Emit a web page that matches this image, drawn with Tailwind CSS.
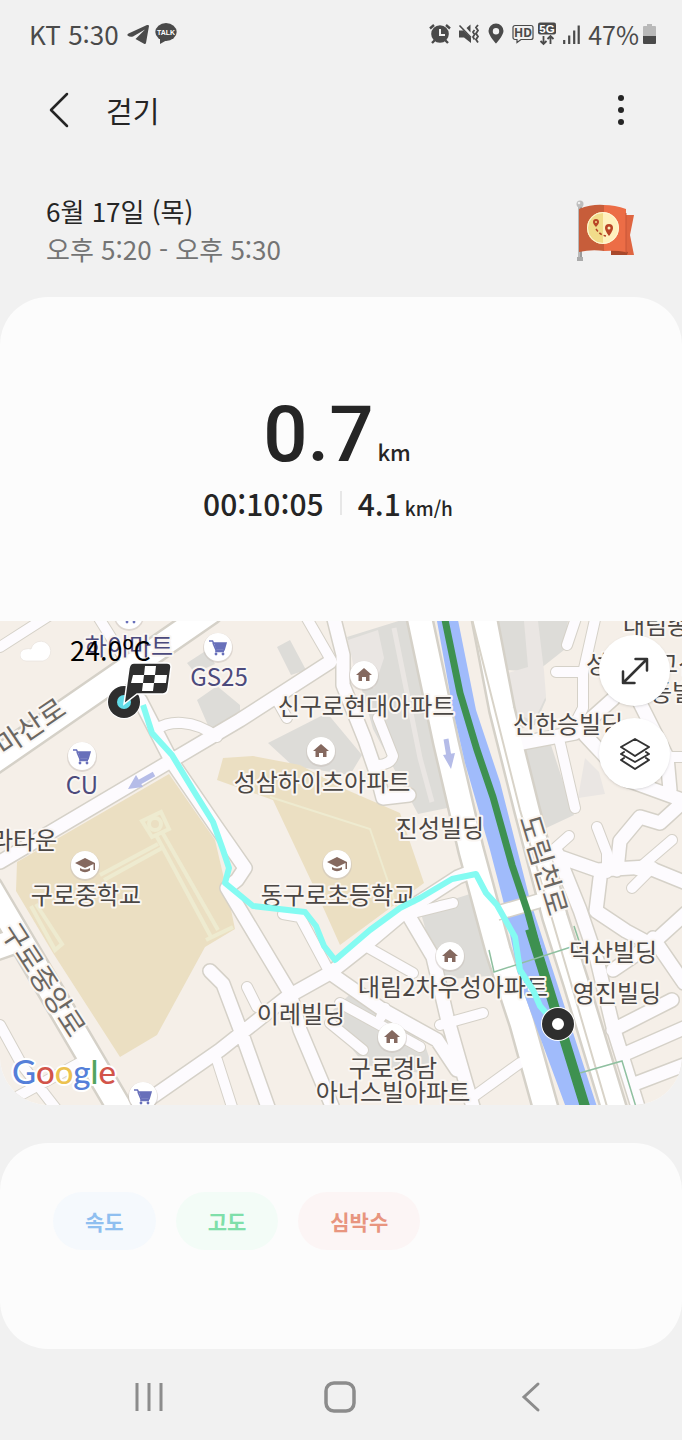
<!DOCTYPE html>
<html lang="ko">
<head>
<meta charset="utf-8">
<meta name="viewport" content="width=device-width, initial-scale=1">
<title>걷기</title>
<script src="https://cdn.jsdelivr.net/npm/@tailwindcss/browser@4"></script>
</head>
<body class="flex min-h-screen flex-col bg-[#f1f1f1] font-['Noto_Sans_CJK_KR',sans-serif] text-[#252525]">

<!-- Status bar -->
<div class="flex h-[68px] items-center justify-between pl-[29px] pr-[26px] text-[26px] leading-8 text-[#4a4a4a]">
  <div class="flex items-center gap-2">
    <span>KT 5:30</span>
    <svg class="h-6 w-[22px]" viewBox="0 0 22 24" fill="currentColor" aria-hidden="true"><path d="M.5 13.500Q0 12 1.500 11.500L20 3q2-.5 2 1l-3 17q-.5 1.500-2 .7L8.500 17 18 7.500 6 14.500q-3 1-5.500-1z"/></svg>
    <svg class="-ml-0.5 h-6 w-[22px]" viewBox="0 0 22 24" aria-hidden="true"><ellipse cx="11" cy="10" rx="10.700" ry="9" fill="currentColor"/><path d="M5 16v6l7-4z" fill="currentColor"/><text x="11" y="13" text-anchor="middle" font-family="Liberation Sans" font-size="7" font-weight="700" fill="#fff">TALK</text></svg>
  </div>
  <div class="flex items-center">
    <svg class="h-6 w-[22px]" viewBox="0 0 22 24" fill="none" stroke="currentColor" aria-hidden="true"><circle cx="11" cy="12" r="8.800" fill="currentColor" stroke="none"/><path d="M1 6.500 5 3M21 6.500 17 3M5.500 18.500 3 21M16.500 18.500 19 21" stroke-width="2.400"/><path d="M11 7v6h5" stroke="#f1f1f1" stroke-width="2"/></svg>
    <svg class="ml-[7px] h-6 w-[22px]" viewBox="0 0 22 24" fill="currentColor" stroke="currentColor" aria-hidden="true"><path d="M1 8.500h4.500L13 16v5l-7-5.500H1zM12.500 2.500v8L8.500 6z" stroke="none"/><path d="m1.500 3.500 11.500 12" fill="none" stroke-width="1.600"/><path d="m16.500 8-1.500 2 1.500 2.500-1.500 2.500 1.500 2.500M20 3l-2 2.500 2 3-2 3 2 3-2 3 2 3" fill="none" stroke-width="1.800"/></svg>
    <svg class="ml-2 h-6 w-4" viewBox="0 0 16 24" aria-hidden="true"><path fill="currentColor" fill-rule="evenodd" d="M8 1.500a7.500 7.500 0 0 0-7.500 7.500c0 4.500 7.500 12.500 7.500 12.500s7.500-8 7.500-12.500A7.500 7.500 0 0 0 8 1.500m0 4.500a3.200 3.200 0 1 1 0 6.400A3.200 3.200 0 0 1 8 6"/></svg>
    <svg class="ml-2 h-6 w-[22px]" viewBox="0 0 22 24" aria-hidden="true"><path d="M3 3.500h16a2 2 0 0 1 2 2v10a2 2 0 0 1-2 2H9l-4 3v-3H3a2 2 0 0 1-2-2v-10a2 2 0 0 1 2-2z" fill="none" stroke="currentColor" stroke-width="1.200"/><text x="11" y="15" text-anchor="middle" font-family="Noto Sans" font-size="12" font-weight="700" fill="currentColor">HD</text></svg>
    <svg class="ml-1 h-6 w-[18px]" viewBox="0 0 18 24" fill="none" stroke="currentColor" aria-hidden="true"><rect width="18" height="12" y="0.500" rx="2" fill="currentColor" stroke="none"/><text x="9" y="10.700" text-anchor="middle" font-family="Liberation Sans" font-size="11.500" font-weight="700" fill="#fff" stroke="none">5G</text><path d="M5.500 14v8M2.500 19l3 3 3-3M12.500 22v-8M9.500 17l3-3 3 3" stroke-width="1.800"/></svg>
    <svg class="ml-[7px] h-6 w-[17px]" viewBox="0 0 17 24" aria-hidden="true"><path d="M1.200 18v4M6.200 13.500V22M11.200 8.500V22M15.700 3.500V22" stroke="currentColor" stroke-width="2.200"/></svg>
    <span class="ml-2 text-[25px]">47%</span>
    <svg class="ml-1 h-6 w-[13px]" viewBox="0 0 13 24" aria-hidden="true"><path d="M4 2h5v2h3a1 1 0 0 1 1 1v9H0V5a1 1 0 0 1 1-1h3z" fill="#b9b9b9"/><path d="M0 14h13v7a1 1 0 0 1-1 1H1a1 1 0 0 1-1-1z" fill="currentColor"/></svg>
  </div>
</div>

<!-- App bar -->
<header class="flex h-[84px] items-center justify-between pl-[42px] pr-[45px]">
  <div class="flex items-center gap-[30px]">
    <button type="button" aria-label="뒤로" class="flex h-10 w-[34px] items-center justify-center"><svg class="h-9 w-5" viewBox="0 0 20 36" fill="none" stroke="currentColor" stroke-width="2.500" stroke-linecap="round" stroke-linejoin="round"><path d="M18 2 2 18l16 16"/></svg></button>
    <h1 class="text-[29px] leading-10">걷기</h1>
  </div>
  <button type="button" aria-label="더보기" class="flex h-10 w-8 items-center justify-center"><svg class="h-8 w-2" viewBox="0 0 8 32" fill="currentColor"><circle cx="4" cy="4" r="3"/><circle cx="4" cy="16" r="3"/><circle cx="4" cy="28" r="3"/></svg></button>
</header>

<!-- Session summary -->
<section class="flex h-[145px] items-start justify-between pl-[46px] pr-12 pt-10">
  <div class="text-[26px] leading-[38px]">
    <p>6월 17일 (목)</p>
    <p class="text-[#747474]">오후 5:20 - 오후 5:30</p>
  </div>
  <svg class="mt-2 h-[64px] w-[60px]" viewBox="0 0 60 64" aria-hidden="true">
    <path d="M4 6h4v53H4z" fill="#b9b9b9"/><path d="M6 6h2v53H6z" fill="#9a9a9a"/><circle cx="6" cy="4" r="3.500" fill="#bdbdbd"/><circle cx="5" cy="3" r="1.300" fill="#eee"/><rect x="3" y="57" width="6" height="4" fill="#aaa"/>
    <path d="M38 15h22l-4 20 4 20H38z" fill="#df6541"/><path d="M37 49l17 3-1 3H37z" fill="#a8482b"/>
    <path d="M5 9q13-5 25-4v46q-12-2-25 1z" fill="#c75d3a"/><path d="M30 5q11 0 22 4v43q-11-2-22-1z" fill="#ec6d46"/>
    <path d="M52 13v40" stroke="#c85739" stroke-width="1"/>
    <circle cx="29" cy="28" r="16" fill="#fff1bd"/><path d="M29 12a16 16 0 0 0 0 32z" fill="#f1dc8a"/><circle cx="29" cy="28" r="15.500" fill="none" stroke="#fff5d8"/>
    <path d="M22 29q4 6 10 7" fill="none" stroke="#b24527" stroke-width="1.500" stroke-dasharray="3 2"/>
    <path fill="#b94425" fill-rule="evenodd" d="M22 19a3 3 0 0 0-3 3c0 2 3 5 3 5s3-3 3-5a3 3 0 0 0-3-3m0 2a1 1 0 1 1 0 2 1 1 0 0 1 0-2M35 24a4 4 0 0 0-4 4c0 3 4 8 4 8s4-5 4-8a4 4 0 0 0-4-4m0 2.500a1.500 1.500 0 1 1 0 3 1.500 1.500 0 0 1 0-3"/>
  </svg>
</section>

<main class="flex grow flex-col">
  <section class="overflow-hidden rounded-[48px] bg-[#fcfcfc]">
    <div class="flex h-[324px] flex-col items-center pt-[98px]">
      <p class="mr-2 flex items-baseline gap-1 leading-[80px]">
        <span class="font-[Roboto,sans-serif] text-[78px] font-medium">0.7</span><span class="text-[22px] font-medium">km</span>
      </p>
      <div class="-mt-2.5 mr-[26px] flex items-center gap-4 font-medium">
        <p class="text-[30px] leading-[44px]">00:10:05</p>
        <span class="h-6 w-0.5 bg-[#e7e7e7]"></span>
        <p class="flex items-baseline gap-1 text-[30px] leading-[44px]">4.1<span class="text-[19px] leading-none">km/h</span></p>
      </div>
    </div>

    <!-- Route map -->
    <div class="relative h-[484px]">
      <svg class="block h-full w-full" viewBox="0 621 682 484" preserveAspectRatio="xMidYMid slice" role="img" aria-label="운동 경로 지도">
        <defs>
          <g id="lanes"><path d="M0 647 50 615M97 615l25 40M157 729q10-7 25-6 18 1 35 14M305 615l26 45M278 702l9 16M378 718l15 38q-2 8-14 9M577 615l-10 30M596 615l-13 58v35l-13 25M556 672h27M560 743l15 65M666 757h20M597 827l10 26v20M672 840l-35 30M569 836l-18 16M653 867l-21 21M440 906l13-3M473 1097l47-34M440 1025l43-12M453 903l-40 10M283 914l17 3 30 56M367 947l46 26M340 1003l80 44M330 1023l33 27M247 987l10 20M385 1008l-4 9M0 1025l22 40 35 45M13 1099l72-39M217 1060l16 50"/></g>
          <g id="streets"><path d="M0 862 240 720 330 662M333 615l10 40v30l22 55 12 35 6 23 26-3M140 700l32 62 43 63 30 43-8 12-10 8 63 105 10 37 32 76M522 743l53-10 38-34M585 735l42 45 55 20M640 703l27 54 3 33M682 803l-22 20-20-6-20 24-3 29M560 857l37 13 50-3 37 15M600 878l-4 33 30 20 28 15M686 913l-33 30-40 27M557 853l23 57 17 50 16 67 26 83M653 938l31 45M613 1030l59-30M627 1053l57-25M637 1083l47-18M410 918l23 39 14 60 18 63 9 30M478 869l-20 8-51 33-44 37-33 26-43 24-67 53-72 50M330 973l53 37 54 30 20 30M210 971l13 13 20 53 26 73"/></g>
          <g id="avenues"><path d="M-10 764 210 612"/><path d="M-10 888 122 1112"/><path d="m418 611 28 132 25 107 27 100 24 73 25 90M483 611l19 99 25 100 28 107 21 66 40 132"/><path d="M-5 948 18 940"/></g>
          <g id="home"><circle r="15" cy="1" fill="#c7c0ba" opacity=".5"/><circle r="14" fill="#fff"/><path d="M0-7 8 0H5.500v6H2V2h-4v4h-3.500V0H-8z" fill="#85695f"/></g>
          <g id="school"><circle r="15" cy="1" fill="#c7c0ba" opacity=".5"/><circle r="14" fill="#fff"/><path d="M0-7 10-2V5H8.500V-1L0 3-10-2zM-5 3q5 3 10 0v2.500Q0 9-5 5.500z" fill="#85695f"/></g>
          <g id="cart"><circle r="15" cy="1" fill="#c7c0ba" opacity=".5"/><circle r="14" fill="#fff"/><path d="M-9-6h3.500l1 2H8L6 3h-8v1.500h8M-5-4l3 7" fill="none" stroke="#6870ba" stroke-width="1.600"/><path d="M-4-4H8L6 2.500h-8z" fill="#6870ba"/><circle cx="-2" cy="7" r="1.400" fill="#6870ba"/><circle cx="5" cy="7" r="1.400" fill="#6870ba"/></g>
        </defs>
        <path fill="#f5efe8" d="M-400 500h1500v800H-400z"/>

        <!-- Buildings and school grounds -->
        <g fill="#dddcd8">
          <path d="m277 647 13-7 16 30-15 5zM197 700l20-14 23 19v10l-30 15zM187 663l20-13 8 14-20 9zM268 743l59-30 35 42-12 20-57-9zM347 637l58-18 10 2 42 185-39 8-45-85zM495 621h73l-4 29-19 15-10 7-28-2zM510 680l30-10 6 30-11 25-20 5zM520 750l30-8 24 73-32 15zM420 910l53-17 27 82-60 5zM333 1010l27-25 65 60 10 30-70-10-20-25z"/>
        </g>
        <path fill="#eae6e3" d="m348 640 30-10 6 28-10 30-20-20zM524 621h14l6 50 2 25-12 25-20-8-6-40 20-6zM585 758l14 14 6 22-27 4z"/>
        <path fill="none" stroke="#eae6e3" stroke-width="5" d="m394 628 26 130 12 44"/>
        <g fill="#ebdfc2">
          <path d="m17 862 152-88 46 66 14 60 6 29-30 18-48 88-37 22-67-104-37-62z"/>
          <path d="m217 780 6-22 30-2 47 9 47 25 53 23 24 70-84 62-26-58-41-87z"/>
        </g>
        <g fill="none" stroke="#eeebd0" stroke-width="4">
          <path d="m142 821 19-9 8 17-17 8zM156 835l55 102M162 832l56 98M206 940l27-13M100 875l58-31M104 880l58-32M31 906l24 44 7-6-26-40"/>
          <path d="m270 797 100 32 28 82" stroke-width="2"/>
          <circle cx="155" cy="824" r="6"/>
        </g>

        <!-- Streets: casing below, surface above -->
        <g fill="none" stroke="#d5d1c8" stroke-linecap="round" stroke-linejoin="round">
          <use href="#lanes" stroke-width="12"/><use href="#streets" stroke-width="16"/><use href="#avenues" stroke-width="28"/>
        </g>
        <g fill="none" stroke="#fdfbfe" stroke-linecap="round" stroke-linejoin="round">
          <use href="#lanes" stroke-width="10"/><use href="#streets" stroke-width="13"/><use href="#avenues" stroke="#fff" stroke-width="23"/>
        </g>
        <path d="m470 611 50 199 50 170 38 130" fill="none" stroke="#d8d3c8" stroke-width="2"/>

        <!-- Stream and metro line -->
        <path fill="#a0bbfb" d="M435 610h21l20 100 24 72 30 118 27 83 42 130h-31l-48-130-17-83-13-50-25-87-12-53z"/>
        <path d="m497 913 42-12" stroke="#d5d1c8" stroke-width="16"/><path d="m494 914 48-14" stroke="#fff" stroke-width="13"/>
        <path d="m443 610 17 83 17 57 16 47 19 68 16 48 19 70 39 130" fill="none" stroke="#3e9150" stroke-width="7"/>
        <path d="m530 929 17 54 40 130" fill="none" stroke="#3e9150" stroke-width="10"/>
        <path d="m489 950 5 22 80-26M574 926l6 18M580 1073l42-12 14 46" fill="none" stroke="#8fc0a0" stroke-width="1.500"/>

        <!-- One-way arrows -->
        <g fill="none" stroke="#b5bce8" stroke-width="5"><path d="m154 774-16 9M446 739l3 18"/></g>
        <path fill="#b5bce8" d="m128 789 8-14 7 12zM443 755l12-2-4 16z"/>

        <!-- Points of interest -->
        <use href="#home" x="364" y="675"/><use href="#home" x="321" y="751"/><use href="#home" x="450" y="956"/><use href="#home" x="392" y="1037"/>
        <use href="#school" x="85" y="865"/><use href="#school" x="337" y="864"/>
        <use href="#cart" x="82" y="756"/><use href="#cart" x="218" y="647"/><use href="#cart" x="143" y="1096"/><use href="#cart" x="129" y="615"/>

        <g font-family="'Noto Sans CJK KR', sans-serif" font-size="24" fill="#4b4744" stroke="#faf6f2" stroke-width="4" stroke-linejoin="round" paint-order="stroke" text-anchor="middle">
          <g fill="#4c4a7c"><text x="129" y="655">하이마트</text><text x="219" y="686">GS25</text><text x="82" y="794">CU</text></g>
          <text x="366" y="715">신구로현대아파트</text>
          <text x="322" y="791">성삼하이츠아파트</text>
          <text x="440" y="837">진성빌딩</text>
          <text x="568" y="733">신한승빌딩</text>
          <text x="24" y="849">라타운</text>
          <text x="86" y="904">구로중학교</text>
          <text x="338" y="904">동구로초등학교</text>
          <text x="453" y="996">대림2차우성아파트</text>
          <text x="613" y="961">덕산빌딩</text>
          <text x="617" y="1002">영진빌딩</text>
          <text x="301" y="1023">이레빌딩</text>
          <text x="393" y="1077">구로경남</text>
          <text x="393" y="1101">아너스빌아파트</text>
          <text x="656" y="634">대림종</text>
          <text x="597" y="673">성</text><text x="678" y="673">고신</text><text x="672" y="701">동빌</text>
          <g fill="#6b6762" font-size="28">
            <text transform="translate(36 735) rotate(-34)">마산로</text>
            <text transform="translate(35 985) rotate(57)">구로중앙로</text>
            <text transform="translate(534 868) rotate(73)">도림천로</text>
          </g>
        </g>

        <!-- Recorded route -->
        <path d="m143 705 9 28 20 22 23 38 18 29 10 28 6 18-4 15 28 23 52 6 11 14 8 20 11 14 35-30 30-22 20-10 32-19 24-5 10 19 11 12 18 32 5 33 13 20 7 16 14 16" fill="none" stroke="#84fbf2" stroke-width="6" stroke-linejoin="round"/>
        <circle cx="558" cy="1024" r="17" fill="#fff"/><circle cx="558" cy="1024" r="11" fill="#fff" stroke="#2e2e2e" stroke-width="10"/>
        <circle cx="124" cy="702" r="17" fill="#fff"/><circle cx="124" cy="702" r="16" fill="#2e2e2e"/><circle cx="124" cy="702" r="7" fill="#62dce8"/>
        <path d="m124 704 5-36q1-5 5-5h33q4 0 4 4l-3 22q-1 5-5 5h-26z" fill="#2e2e2e" stroke="#fff" stroke-width="1.500"/>
        <path fill="#fff" d="m145 666 11 0-1 9-11 0zM133 675h11l-1 8h-12zM155 675h12l-1 8h-12zM143 683h11l-1 8h-11z"/>

        <text x="12" y="1084" font-family="Lato, sans-serif" font-size="33" font-weight="500" stroke="#fff" stroke-width="4" stroke-linejoin="round" paint-order="stroke"><tspan fill="#557fd9">G</tspan><tspan fill="#d2544a">o</tspan><tspan fill="#ecc24f">o</tspan><tspan fill="#557fd9">g</tspan><tspan fill="#52a45e">l</tspan><tspan fill="#d2544a">e</tspan></text>
      </svg>

      <!-- Weather overlay -->
      <div class="absolute left-5 top-2.5 flex items-center gap-[18px] text-black">
        <svg class="h-6 w-8" viewBox="0 0 32 24" fill="#fff" aria-hidden="true"><path d="M6 23a6 6 0 0 1 0-12q2-1 5 0a10 10 0 1 1 12 12z" stroke="#e8e2dc" stroke-width=".7"/></svg>
        <span class="text-[27px] leading-[38px]">24.0ºC</span>
      </div>

      <!-- Map controls -->
      <div class="absolute right-3 top-3.5 flex flex-col gap-3">
        <button type="button" aria-label="지도 확대" class="flex size-[71px] items-center justify-center rounded-full bg-white text-[#333] shadow-sm"><svg class="size-7" viewBox="0 0 28 28" fill="none" stroke="currentColor" stroke-width="2.500" stroke-linecap="round" stroke-linejoin="round"><path d="M2 26 26 2M14.500 2H26v11.500M2 14.500V26h11.500"/></svg></button>
        <button type="button" aria-label="지도 유형" class="flex size-[71px] items-center justify-center rounded-full bg-white text-[#333] shadow-sm"><svg class="size-8" viewBox="0 0 32 32" fill="none" stroke="currentColor" stroke-width="2" stroke-linejoin="round" stroke-linecap="round"><path d="m16 1 14 8-14 9L2 9zM5 14l-3 2 14 8 14-8-3-2M5 20l-3 2 14 9 14-9-3-2"/></svg></button>
      </div>
    </div>
  </section>

  <!-- Chart filters -->
  <section class="mt-[38px] h-[206px] rounded-[48px] bg-[#fcfcfc] pl-[53px] pt-[49px]">
    <div class="flex gap-5 text-[21px] font-bold leading-[30px]">
      <button type="button" class="h-[58px] rounded-full bg-[#f5f9fd] px-8 text-[#8fbff0]">속도</button>
      <button type="button" class="h-[58px] rounded-full bg-[#f3fcf7] px-8 text-[#7fdfaa]">고도</button>
      <button type="button" class="h-[58px] rounded-full bg-[#fcf5f5] px-8 text-[#e8957f]">심박수</button>
    </div>
  </section>
</main>

<!-- System navigation -->
<nav class="grid h-[91px] grid-cols-3 items-center justify-items-center pl-[53px] pr-14 pt-1 text-[#8c8c8c]">
  <button type="button" aria-label="최근 앱" class="p-2"><svg class="h-8 w-7" viewBox="0 0 28 32" fill="none" stroke="currentColor" stroke-width="3"><path d="M2 2v28M14 2v28M26 2v28"/></svg></button>
  <button type="button" aria-label="홈" class="p-2"><svg class="h-8 w-8" viewBox="0 0 32 32" fill="none" stroke="currentColor" stroke-width="3.500"><rect x="2" y="2" width="28" height="28" rx="8"/></svg></button>
  <button type="button" aria-label="이전" class="p-2"><svg class="h-8 w-5" viewBox="0 0 20 32" fill="none" stroke="currentColor" stroke-width="3" stroke-linecap="round"><path d="M17 3 3 16l14 13"/></svg></button>
</nav>
</body>
</html>
